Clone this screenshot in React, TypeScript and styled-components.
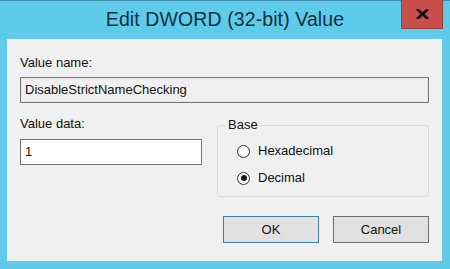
import styled, { createGlobalStyle } from "styled-components";

const GlobalStyle = createGlobalStyle`
  html, body {
    margin: 0;
    padding: 0;
    background: #5fcbeb;
  }
  * {
    box-sizing: border-box;
  }
`;

const Window = styled.div`
  width: 450px;
  height: 269px;
  display: flex;
  flex-direction: column;
  background: #5fcbeb;
  border-top: 1px solid #3f8db0;
  font-family: "Liberation Sans", Arial, sans-serif;
  color: #000;
`;

const TitleBar = styled.div`
  position: relative;
  height: 38px;
  display: flex;
  align-items: center;
  justify-content: center;
  padding-bottom: 2px;
`;

const Title = styled.h1`
  margin: 0;
  font-size: 19.5px;
  font-weight: normal;
  color: #12303f;
  letter-spacing: 0.1px;
`;

const CloseButton = styled.button`
  position: absolute;
  top: -1px;
  right: 7px;
  width: 42px;
  height: 29px;
  padding: 0;
  background: #c84f4c;
  border: 1px solid #9a3c3a;
  border-top: none;
  display: flex;
  align-items: center;
  justify-content: center;
`;

const Client = styled.div`
  margin: 0 8px 8px 7px;
  flex: 1;
  background: #f0f0f0;
  padding: 16px 13px 0 13px;
  display: flex;
  flex-direction: column;
  font-size: 13px;
`;

const Label = styled.div<{ $top?: number }>`
  line-height: 16px;
  margin-top: ${(p) => p.$top ?? 0}px;
  color: #111;
`;

const TextBox = styled.div<{ $disabled?: boolean; $width?: number; $gap?: number }>`
  margin-top: ${(p) => p.$gap ?? 6}px;
  height: 26px;
  width: ${(p) => (p.$width ? `${p.$width}px` : "100%")};
  border: 1px solid #767676;
  box-shadow: inset 0 0 0 1px ${(p) => (p.$disabled ? "#e4e4e4" : "#fff")};
  background: ${(p) => (p.$disabled ? "#f0f0f0" : "#fff")};
  padding: 0 4px;
  display: flex;
  align-items: center;
  line-height: 16px;
  color: #111;
`;

const DataRow = styled.div`
  display: flex;
  gap: 15px;
  margin-top: 13px;
`;

const Column = styled.div`
  display: flex;
  flex-direction: column;
`;

const GroupBox = styled.div`
  position: relative;
  margin-top: 9px;
  width: 213px;
  height: 72px;
  border: 1px solid #dcdcdc;
  border-radius: 3px;
  padding: 17px 0 0 19px;
  display: flex;
  flex-direction: column;
  gap: 11px;
`;

const Legend = styled.span`
  position: absolute;
  top: -9px;
  left: 8px;
  padding: 0 2px;
  background: #f0f0f0;
  line-height: 16px;
  color: #111;
`;

const RadioRow = styled.label`
  display: flex;
  align-items: center;
  gap: 8px;
  line-height: 16px;
  color: #111;
`;

const RadioCircle = styled.span<{ $checked?: boolean }>`
  width: 13px;
  height: 13px;
  border-radius: 50%;
  border: 1px solid #333;
  background: #fff;
  display: flex;
  align-items: center;
  justify-content: center;

  &::after {
    content: "";
    width: 6px;
    height: 6px;
    border-radius: 50%;
    background: ${(p) => (p.$checked ? "#1a1a1a" : "transparent")};
  }
`;

const ButtonRow = styled.div`
  display: flex;
  justify-content: flex-end;
  gap: 14px;
  margin-top: 19px;
`;

const Button = styled.button<{ $default?: boolean }>`
  width: 96px;
  height: 27px;
  background: #e1e1e1;
  border: 1px solid ${(p) => (p.$default ? "#3d7fb4" : "#6f6f6f")};
  font-family: inherit;
  font-size: 13px;
  color: #111;
  padding: 0;
`;

function Radio({ label, checked }: { label: string; checked?: boolean }) {
  return (
    <RadioRow>
      <RadioCircle $checked={checked} />
      {label}
    </RadioRow>
  );
}

export default function App() {
  return (
    <>
      <GlobalStyle />
      <Window>
        <TitleBar>
          <Title>Edit DWORD (32-bit) Value</Title>
          <CloseButton aria-label="Close">
            <svg width="13" height="10" viewBox="0 0 13 10">
              <path
                d="M2 1 L11 9 M11 1 L2 9"
                stroke="#111"
                strokeWidth="2.8"
                strokeLinecap="square"
              />
            </svg>
          </CloseButton>
        </TitleBar>
        <Client>
          <Label>Value name:</Label>
          <TextBox $disabled>DisableStrictNameChecking</TextBox>
          <DataRow>
            <Column>
              <Label>Value data:</Label>
              <TextBox $width={182} $gap={7}>
                1
              </TextBox>
            </Column>
            <GroupBox>
              <Legend>Base</Legend>
              <Radio label="Hexadecimal" />
              <Radio label="Decimal" checked />
            </GroupBox>
          </DataRow>
          <ButtonRow>
            <Button $default>OK</Button>
            <Button>Cancel</Button>
          </ButtonRow>
        </Client>
      </Window>
    </>
  );
}
